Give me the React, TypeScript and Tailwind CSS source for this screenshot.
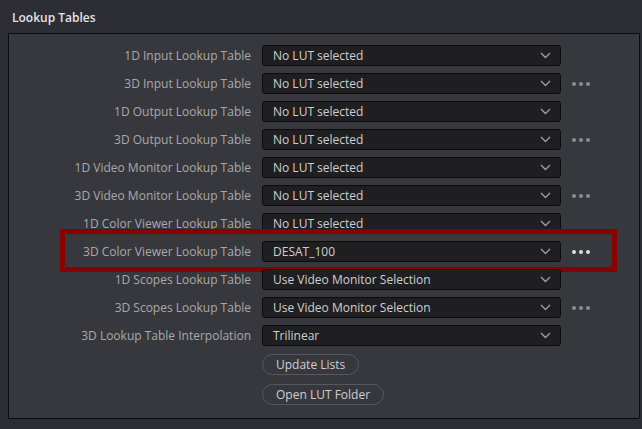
import React from "react";

type Row = { label: string; value: string; more?: boolean; highlight?: boolean };

const ROWS: Row[] = [
  { label: "1D Input Lookup Table", value: "No LUT selected" },
  { label: "3D Input Lookup Table", value: "No LUT selected", more: true },
  { label: "1D Output Lookup Table", value: "No LUT selected" },
  { label: "3D Output Lookup Table", value: "No LUT selected", more: true },
  { label: "1D Video Monitor Lookup Table", value: "No LUT selected" },
  { label: "3D Video Monitor Lookup Table", value: "No LUT selected", more: true },
  { label: "1D Color Viewer Lookup Table", value: "No LUT selected" },
  { label: "3D Color Viewer Lookup Table", value: "DESAT_100", more: true, highlight: true },
  { label: "1D Scopes Lookup Table", value: "Use Video Monitor Selection" },
  { label: "3D Scopes Lookup Table", value: "Use Video Monitor Selection", more: true },
  { label: "3D Lookup Table Interpolation", value: "Trilinear" },
];

const Chevron = () => (
  <svg width="11" height="7" viewBox="0 0 11 7" className="shrink-0">
    <path d="M1 1l4.5 4.5L10 1" fill="none" stroke="#9c9c9e" strokeWidth="1.4" />
  </svg>
);

const Dots = ({ bright }: { bright?: boolean }) => (
  <div className="flex items-center gap-[3px] ml-[11px]">
    {[0, 1, 2].map((i) => (
      <span
        key={i}
        className={
          bright
            ? "block w-[4px] h-[4px] rounded-full bg-[#dedede]"
            : "block w-[4px] h-[4px] rounded-full bg-[#8d8d90]"
        }
      />
    ))}
  </div>
);

const Select = ({ value }: { value: string }) => (
  <div className="w-[299px] h-[21px] flex items-center justify-between pl-[10px] pr-[9px] bg-[#1f1f21] border border-[#0b0b0c] rounded-[3px] text-[12px] text-[#cfcfd1]">
    <span>{value}</span>
    <Chevron />
  </div>
);

const PillButton = ({ children }: { children: React.ReactNode }) => (
  <button className="h-[21px] px-[13px] rounded-full border border-[#57585d] bg-[#37383d] text-[12px] text-[#cfcfd1] leading-none">
    {children}
  </button>
);

export default function App() {
  return (
    <div
      className="w-[642px] h-[429px] bg-[#2c2d35] overflow-hidden"
      style={{ fontFamily: '"Open Sans", "Noto Sans", sans-serif' }}
    >
      <div className="h-[33px] flex items-center pl-[12px] pt-[3px] text-[12px] font-semibold text-[#e4e4e6]">
        Lookup Tables
      </div>
      <div className="ml-[8px] w-[632px] h-[386px] bg-[#37383d] border border-[#0c0c0e] rounded-br-[2px] pt-[11px] flex flex-col gap-[7px]">
        {ROWS.map((r) => (
          <div key={r.label} className="relative flex items-center h-[21px]">
            <div className="w-[242px] text-right text-[12px] text-[#a9a9ac]">{r.label}</div>
            <div className="ml-[11px]">
              <Select value={r.value} />
            </div>
            {r.more && <Dots bright={r.highlight} />}
            {r.highlight && (
              <div className="absolute left-[51px] top-[-12px] w-[557px] h-[43px] border-[5px] border-[#880000]" />
            )}
          </div>
        ))}
        <div className="flex flex-col items-start gap-[9px] pl-[253px] pt-[1px]">
          <PillButton>Update Lists</PillButton>
          <PillButton>Open LUT Folder</PillButton>
        </div>
      </div>
    </div>
  );
}
